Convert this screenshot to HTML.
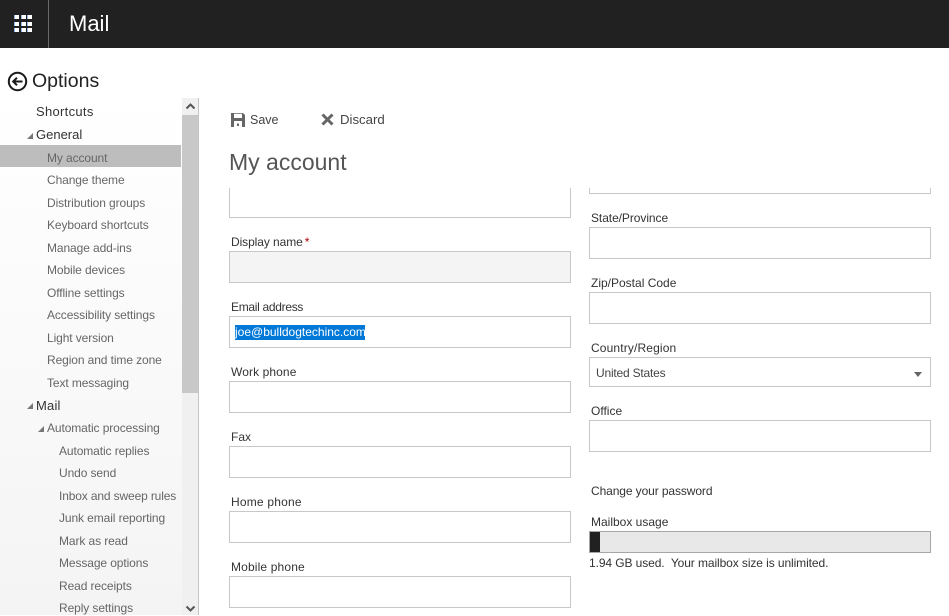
<!DOCTYPE html>
<html><head><meta charset="utf-8"><style>
html,body{margin:0;padding:0;background:#fff}
body{width:949px;height:615px;position:relative;overflow:hidden;font-family:"Liberation Sans",sans-serif;font-size:12px;color:#333}
.a,.t{position:absolute}
.t{white-space:nowrap;line-height:16px;transform:translateY(1px)}
.n{color:#666;letter-spacing:-.1px}
.h{color:#333;font-size:13px}
.l{color:#333}
.b{position:absolute;box-sizing:border-box;border:1px solid #c8c8c8;background:#fff}
.tri{position:absolute;width:0;height:0;border-style:solid;border-width:0 0 6px 6px;border-color:transparent transparent #777 transparent}
.g{position:absolute;width:4px;height:4px;background:#fff;border-left:1px solid #8fb8e8;border-right:0}
</style></head><body>
<div class="a" style="left:0;top:0;width:949px;height:48px;background:#212121"></div>
<div class="a" style="left:48px;top:0;width:1px;height:48px;background:#6a6a6a"></div>
<div class="g" style="left:14px;top:15px"></div><div class="g" style="left:21px;top:15px"></div><div class="g" style="left:27px;top:15px"></div>
<div class="g" style="left:14px;top:22px"></div><div class="g" style="left:21px;top:22px"></div><div class="g" style="left:27px;top:22px"></div>
<div class="g" style="left:14px;top:28px"></div><div class="g" style="left:21px;top:28px"></div><div class="g" style="left:27px;top:28px"></div>
<div class="t" style="left:69px;top:9px;font-size:22px;line-height:28px;color:#fff">Mail</div>

<svg class="a" style="left:7px;top:71px" width="21" height="21" viewBox="0 0 21 21"><circle cx="10.5" cy="10.5" r="8.7" fill="none" stroke="#1a1a1a" stroke-width="2"/><path d="M15.5 10.5H6.5M10 6.7L6.2 10.5L10 14.3" fill="none" stroke="#1a1a1a" stroke-width="2"/></svg>
<div class="t" style="left:32px;top:67px;font-size:19.5px;line-height:26px;color:#222">Options</div>

<div class="a" style="left:0;top:98px;width:182px;height:517px;background:linear-gradient(#fff,#f4f4f4)"></div>
<div class="a" style="left:182px;top:98px;width:16px;height:517px;background:#f0f0f0"></div>
<div class="a" style="left:182px;top:115px;width:16px;height:278px;background:#c8c8c8"></div>
<div class="a" style="left:198px;top:98px;width:1px;height:517px;background:#c4c4c4"></div>
<svg class="a" style="left:185px;top:102px" width="11" height="8" viewBox="0 0 11 8"><path d="M1.5 6.5L5.5 2.5L9.5 6.5" fill="none" stroke="#555" stroke-width="2"/></svg>
<svg class="a" style="left:185px;top:605px" width="11" height="8" viewBox="0 0 11 8"><path d="M1.5 1.5L5.5 5.5L9.5 1.5" fill="none" stroke="#555" stroke-width="2"/></svg>
<div class="a" style="left:0;top:145px;width:181px;height:22px;background:#bdbdbd"></div>

<div class="t h" style="left:36px;top:103px;letter-spacing:.3px">Shortcuts</div>
<div class="tri" style="left:27px;top:133px"></div>
<div class="t h" style="left:36px;top:126px">General</div>
<div class="t n" style="left:47px;top:149px">My account</div>
<div class="t n" style="left:47px;top:171px">Change theme</div>
<div class="t n" style="left:47px;top:194px">Distribution groups</div>
<div class="t n" style="left:47px;top:216px">Keyboard shortcuts</div>
<div class="t n" style="left:47px;top:239px">Manage add-ins</div>
<div class="t n" style="left:47px;top:261px">Mobile devices</div>
<div class="t n" style="left:47px;top:284px">Offline settings</div>
<div class="t n" style="left:47px;top:306px">Accessibility settings</div>
<div class="t n" style="left:47px;top:329px">Light version</div>
<div class="t n" style="left:47px;top:351px">Region and time zone</div>
<div class="t n" style="left:47px;top:374px">Text messaging</div>
<div class="tri" style="left:27px;top:403px"></div>
<div class="t h" style="left:36px;top:397px;letter-spacing:.2px">Mail</div>
<div class="tri" style="left:38px;top:426px"></div>
<div class="t n" style="left:47px;top:419px">Automatic processing</div>
<div class="t n" style="left:59px;top:442px">Automatic replies</div>
<div class="t n" style="left:59px;top:464px">Undo send</div>
<div class="t n" style="left:59px;top:487px;letter-spacing:-.14px">Inbox and sweep rules</div>
<div class="t n" style="left:59px;top:509px">Junk email reporting</div>
<div class="t n" style="left:59px;top:532px">Mark as read</div>
<div class="t n" style="left:59px;top:554px">Message options</div>
<div class="t n" style="left:59px;top:577px">Read receipts</div>
<div class="t n" style="left:59px;top:599px">Reply settings</div>

<svg class="a" style="left:231px;top:113px" width="14" height="14" viewBox="0 0 14 14"><path fill="#666" fill-rule="evenodd" d="M0 0H12L14 2V14H0ZM3 0.8V5H11V0.8ZM3 8V14H11V8ZM6 10.5H8V13H6Z"/></svg>
<div class="t" style="left:250px;top:111px;font-size:12.5px;color:#444">Save</div>
<svg class="a" style="left:321px;top:113px" width="13" height="13" viewBox="0 0 13 13"><path d="M1.5 1.5L11.5 11.5M11.5 1.5L1.5 11.5" stroke="#666" stroke-width="3"/></svg>
<div class="t" style="left:340px;top:111px;font-size:13.2px;color:#444">Discard</div>
<div class="t" style="left:229px;top:145px;font-size:23px;line-height:32px;color:#555">My account</div>

<div class="b" style="left:229px;top:188px;width:342px;height:30px;border-top:0"></div>

<div class="t l" style="left:231px;top:233px;letter-spacing:-.08px">Display name<span style="color:#a80000;margin-left:2px">*</span></div>
<div class="b" style="left:229px;top:251px;width:342px;height:32px;background:#f4f4f4"></div>
<div class="t l" style="left:231px;top:298px;letter-spacing:-.3px">Email address</div>
<div class="b" style="left:229px;top:316px;width:342px;height:32px"></div>
<div class="a" style="left:235px;top:325px;width:130px;height:15px;background:#0078d7"></div>
<div class="t" style="left:235px;top:324px;line-height:15px;color:#fff">joe@bulldogtechinc.com</div>
<div class="t l" style="left:231px;top:363px;letter-spacing:.1px">Work phone</div>
<div class="b" style="left:229px;top:381px;width:342px;height:32px"></div>
<div class="t l" style="left:231px;top:428px">Fax</div>
<div class="b" style="left:229px;top:446px;width:342px;height:32px"></div>
<div class="t l" style="left:231px;top:493px;letter-spacing:.2px">Home phone</div>
<div class="b" style="left:229px;top:511px;width:342px;height:32px"></div>
<div class="t l" style="left:231px;top:558px;letter-spacing:.15px">Mobile phone</div>
<div class="b" style="left:229px;top:576px;width:342px;height:32px"></div>

<div class="b" style="left:589px;top:188px;width:342px;height:6px;border-top:0"></div>
<div class="t l" style="left:591px;top:209px;letter-spacing:-.07px">State/Province</div>
<div class="b" style="left:589px;top:227px;width:342px;height:32px"></div>
<div class="t l" style="left:591px;top:274px">Zip/Postal Code</div>
<div class="b" style="left:589px;top:292px;width:342px;height:32px"></div>
<div class="t l" style="left:591px;top:339px;letter-spacing:.14px">Country/Region</div>
<div class="b" style="left:589px;top:357px;width:342px;height:30px"></div>
<div class="t" style="left:596px;top:364px;color:#444;letter-spacing:-.2px">United States</div>
<div class="a" style="left:914px;top:372px;width:0;height:0;border-left:4.5px solid transparent;border-right:4.5px solid transparent;border-top:5px solid #666"></div>
<div class="t l" style="left:591px;top:402px">Office</div>
<div class="b" style="left:589px;top:420px;width:342px;height:32px"></div>
<div class="t l" style="left:591px;top:482px;letter-spacing:-.1px">Change your password</div>
<div class="t l" style="left:591px;top:513px">Mailbox usage</div>
<div class="b" style="left:589px;top:531px;width:342px;height:22px;background:#e8e8e8;border-color:#a6a6a6"></div>
<div class="a" style="left:590px;top:532px;width:10px;height:20px;background:#212121"></div>
<div class="t l" style="left:589px;top:554px;letter-spacing:-.09px">1.94 GB used.&nbsp; Your mailbox size is unlimited.</div>
</body></html>
